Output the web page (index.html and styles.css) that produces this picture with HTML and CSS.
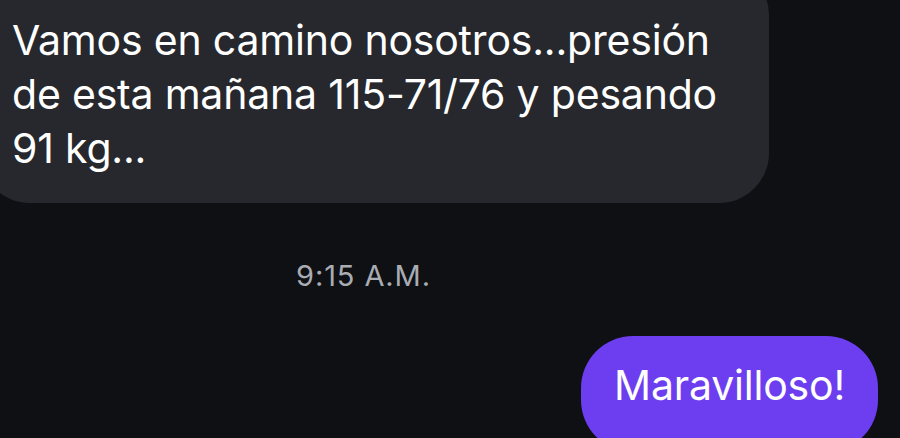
FILE: index.html
```html
<!DOCTYPE html>
<html lang="es">
<head>
    <meta charset="UTF-8">
    <meta name="viewport" content="width=device-width, initial-scale=1.0">
    <title>Mensajes</title>
    <link rel="stylesheet" href="styles.css">
</head>
<body>
<div class="thread">
    <div class="bubble received">
        Vamos en camino nosotros...presión de esta mañana 115-71/76 y pesando 91 kg...
    </div>
    <div class="timestamp">9:15 A.M.</div>
    <div class="bubble sent">Maravilloso!</div>
</div>
</body>
</html>
```

FILE: styles.css
```css
:root {
    --background-color: #0e1014;
    --received-color: #26282d;
    --sent-color: #6d3ef0;
    --meta-color: #a9acb3;
}

body {
    margin: 0;
    height: 438px;
    overflow: hidden;
    background-color: var(--background-color);
    font-family: 'Inter', 'Liberation Sans', sans-serif;
    color: #fff;
}

.thread {
    display: flex;
    flex-direction: column;
}

.bubble {
    font-size: 41px;
    line-height: 54px;
    letter-spacing: -0.2px;
}

.received {
    align-self: flex-start;
    width: 737px;
    margin: -35px 0 0 -20px;
    padding: 48px 20px 28px 32px;
    background-color: var(--received-color);
    border-radius: 50px;
}

.timestamp {
    margin: 56px 0 0 296px;
    font-size: 29px;
    line-height: 34px;
    letter-spacing: 0.9px;
    color: var(--meta-color);
}

.sent {
    align-self: flex-end;
    margin: 43px 22px 0 0;
    padding: 22px 33px 40px;
    background-color: var(--sent-color);
    border-radius: 52px;
}
```
